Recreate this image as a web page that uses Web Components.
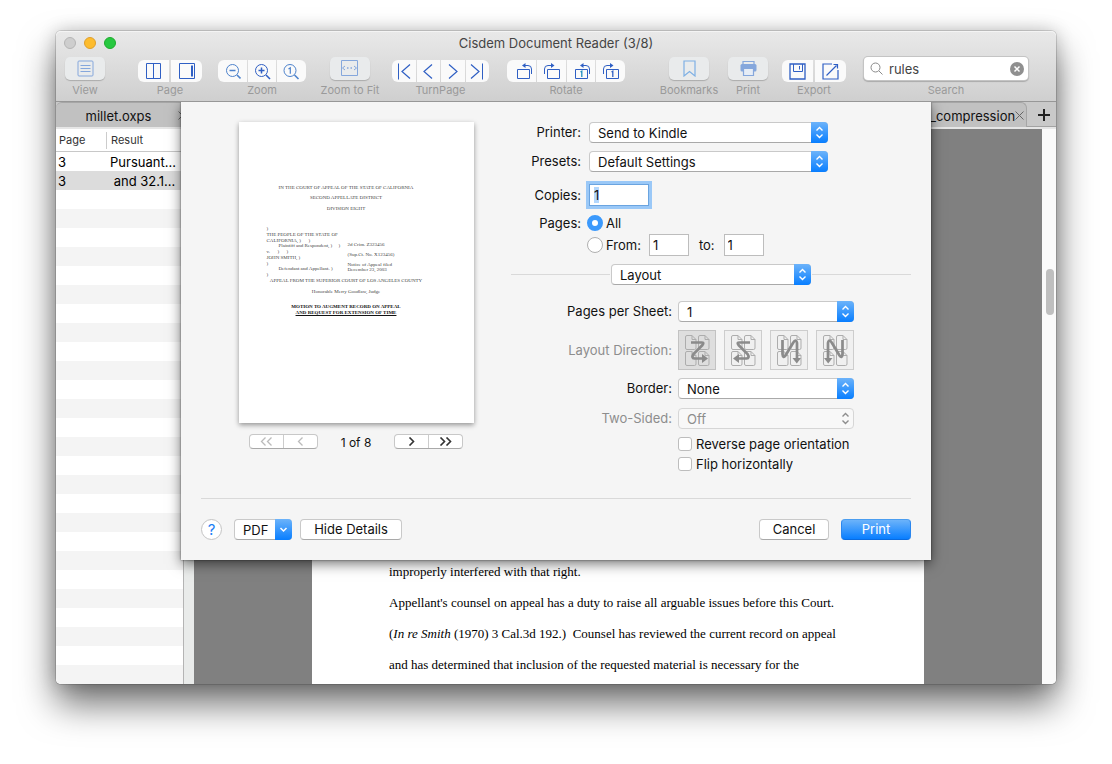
<!DOCTYPE html>
<html lang="en">
<head>
<meta charset="utf-8">
<title>Cisdem Document Reader</title>
<style>
  html { height: 100%; }
  body { margin: 0; box-sizing: border-box; min-height: 100vh; padding: 31px 56px 80px; display: flex;
    background: #fff; font: 13px/16px Inter, "Liberation Sans", sans-serif; color: #111; }
  app-window { flex: 1; min-width: 0; }
</style>
</head>
<body>
<app-window></app-window>
<script>
const FORM = 'button,input,select{font:inherit;color:inherit;margin:0;box-sizing:border-box}button{padding:0;border:0;background:none}svg{display:block}*{box-sizing:border-box}';

function define(name, render, ready) {
  customElements.define(name, class extends HTMLElement {
    connectedCallback() {
      if (this.shadowRoot) return;
      const root = this.attachShadow({ mode: 'open' });
      root.innerHTML = '<style>' + FORM + '</style>' + render(this);
      if (ready) ready(root, this);
    }
  });
}

const svg = (w, h, body) => `<svg width="${w}" height="${h}" viewBox="0 0 ${w} ${h}" fill="none" stroke="currentColor" aria-hidden="true">${body}</svg>`;
const ICONS = {
  view: svg(17, 17, '<rect x="1" y="1" width="15" height="15" rx="1"/><path d="M3.5 5.5h10M3.5 8.5h10M3.5 11.5h10" stroke-width="1"/>'),
  columns: svg(17, 17, '<path d="M1.5 .5h14v15h-14zM8.5 .5v15"/>'),
  sidebar: svg(17, 17, '<path d="M1.5 .5h15v15h-15z"/><path d="M14 2.5v11" stroke-width="2"/>'),
  zoomout: svg(17, 17, '<g stroke="#4d82cc"><circle cx="8.5" cy="7.5" r="6"/><path d="M5.5 7.5h6" stroke-width="1.5"/><path d="M13 12l3.500 3.500" stroke-width="1.6"/></g>'),
  zoomin: svg(17, 17, '<circle cx="7.5" cy="7.5" r="6"/><path d="M4.5 7.5h6M7.5 4.5v6" stroke-width="1.5"/><path d="M12 12l4 4" stroke-width="1.6"/>'),
  zoomone: svg(17, 17, '<g stroke="#4d82cc"><circle cx="7" cy="7.5" r="6"/><path d="M5.500 6l1.8-1.2v6" stroke-width="1.2"/><path d="M11.500 12l4 4" stroke-width="1.6"/></g>'),
  fit: svg(18, 17, '<path d="M.5 .5h16v15h-16z"/><path d="M4 6l-2.500 2L4 10M13 6l2.500 2L13 10"/><path d="M6 8h1.500M9.500 8h1.500" stroke-width="1.500"/>'),
  first: svg(14, 17, '<path d="M1.500 .5v16" /><path d="M13 1.500L5 8.500l8 7" stroke-width="1.200"/>'),
  prev: svg(12, 17, '<path d="M10 1.500L2 8.500l8 7" stroke-width="1.200"/>'),
  next: svg(12, 17, '<path d="M2 1.500l8 7-8 7" stroke-width="1.200"/>'),
  last: svg(14, 17, '<path d="M12.500 .5v16"/><path d="M1 1.500l8 7-8 7" stroke-width="1.200"/>'),
  rotl: svg(23, 17, '<g transform="translate(6)"><path d="M1.500 6.500h12v9h-12z"/><path d="M7 2.500h5q3.500 0 3.500 3.500v5"/><path d="M9.500 0v5L6 2.500z" fill="currentColor" stroke="none"/></g>'),
  rotr: svg(17, 17, '<path d="M4.500 6.500h12v9h-12z"/><path d="M10 2.500H5Q1.500 2.500 1.500 6v5"/><path d="M8 0v5l3.500-2.500z" fill="currentColor" stroke="none"/>'),
  rotl1: svg(21, 17, '<g transform="translate(4)"><path d="M1.500 6.500h12v9h-12z"/><path d="M7 2.500h5q3.500 0 3.500 3.500v5"/><path d="M9.500 0v5L6 2.500z" fill="currentColor" stroke="none"/><path d="M6.500 9l1.300-.8v5.800" stroke="#1f8fc0" stroke-width="1.300"/></g>'),
  rotr1: svg(17, 17, '<path d="M4.500 6.500h12v9h-12z"/><path d="M10 2.500H5Q1.500 2.500 1.500 6v5"/><path d="M8 0v5l3.500-2.500z" fill="currentColor" stroke="none"/><path d="M9.500 9l1.300-.8v5.800" stroke-width="1.300"/>'),
  bookmark: svg(13, 17, '<path d="M1 1h11v15l-5.500-4.500L1 16z" stroke="#7fb0e4" stroke-width="1.200"/>'),
  print: svg(17, 17, '<path d="M3 4V1.500h11V4" stroke-width="1.200"/><rect x=".5" y="4" width="16" height="7.500" rx="1.500" fill="currentColor" stroke="none"/><path d="M3.500 8.500h10v7h-10z" fill="#e6edf6" stroke-width="1.200"/>'),
  save: svg(17, 17, '<path d="M1 1h15v15H1z" stroke-width="1.300"/><path d="M4.500 1v7.500h9V1M10.500 3v3.500"/>'),
  share: svg(17, 17, '<path d="M10 1H1v15h15V7M4.500 12.500L14.500 2.500M11.500 1.500h4V5.500" stroke-width="1.200"/>'),
};

/* One labelled toolbar entry: a single pale key, or a joined row of keys. */
define('tool-item', el => `<style>
  :host{display:flex;flex-direction:column;align-items:center;justify-content:flex-end;gap:1px;flex:none}
  .keys{display:flex;gap:2px;width:100%;color:#2f5fc4}
  .keys button{flex:1 1 0;height:22px;background:#fafafa;display:flex;align-items:center;justify-content:center}
  .keys button:first-child{border-radius:6px 0 0 6px}
  .keys button:last-child{border-radius:0 6px 6px 0}
  .keys.tight{gap:1px}
  .keys.solo{width:40px;padding-bottom:2px;color:#85a7dc}
  .keys.solo button{border-radius:5px;height:23px;background:#e9ebec;box-shadow:0 1px 1px #0003}
  span{font-size:11px;line-height:14px;color:#9a9a9a;white-space:nowrap}
</style>` + (el.hasAttribute('icons') ? (() => {
  const list = el.getAttribute('icons').split(' ');
  return `<div class="keys ${list.length === 1 ? 'solo' : list.length > 2 ? 'tight' : ''}">` +
    list.map(i => `<button type="button" aria-label="${i}">${ICONS[i]}</button>`).join('') + '</div>';
})() : '<slot></slot>') + `<span>${el.getAttribute('label')}</span>`);

define('search-field', () => `<style>
  :host{display:flex;align-items:center;gap:6px;width:164px;height:23px;margin-bottom:2px;padding:0 4px 0 6px;background:#fff;border-radius:4px;box-shadow:0 0 0 1px #c4c4c4,0 1px 1px 1px #aaa;color:#444}
  input{flex:1;min-width:0;border:0;outline:0;background:none;padding:0;height:18px}
  button{width:14px;height:14px;border-radius:7px;background:#8f8f8f;color:#fff;display:grid;place-items:center}
</style>
${svg(13, 13, '<g stroke="#8a8a8a"><circle cx="5.500" cy="5.500" r="4.500"/><path d="M9 9l3.500 3.500"/></g>')}
<input type="text" value="rules" aria-label="Search">
<button type="button" aria-label="Clear search">${svg(8, 8, '<path d="M1.500 1.500l5 5M6.500 1.500l-5 5" stroke-width="1.500"/>')}</button>`);

define('window-toolbar', () => `<style>
  :host{display:block;background:linear-gradient(#e9e9e9,#cfcfcf);border-bottom:1px solid #979797;border-radius:5px 5px 0 0;box-shadow:inset 0 1px #f4f4f4}
  .title{display:grid;grid-template-columns:1fr auto 1fr;align-items:center;height:24px;padding:0 8px;color:#454545}
  .lights{display:flex;gap:8px}
  .lights button{width:12px;height:12px;border-radius:6px;border:1px solid #b5b5b5;background:#cecece}
  .lights .min{background:#fdbc2e;border-color:#df9f2b}
  .lights .max{background:#27c840;border-color:#1eab2c}
  .tools{display:flex;height:46px;padding:0 28px 4px 9px}
  .touch{margin-left:9px}.tight{margin-left:12px}.near{margin-left:14px}.mid{margin-left:18px}.far{margin-left:33px}.end{margin-left:auto}
  .page{margin-right:-2px}
  .w40{width:40px}.w60{width:60px}.w64{width:64px}.w88{width:88px}.w97{width:97px}.w118{width:118px}
</style>
<div class="title"><div class="lights"><button aria-label="Close"></button><button class="min" aria-label="Minimize"></button><button class="max" aria-label="Full screen"></button></div><span>Cisdem Document Reader (3/8)</span></div>
<div class="tools">
  <tool-item class="w40" label="View" icons="view"></tool-item>
  <tool-item class="far page w64" label="Page" icons="columns sidebar"></tool-item>
  <tool-item class="mid w88" label="Zoom" icons="zoomout zoomin zoomone"></tool-item>
  <tool-item class="near w60" label="Zoom to Fit" icons="fit"></tool-item>
  <tool-item class="tight w97" label="TurnPage" icons="first prev next last"></tool-item>
  <tool-item class="mid w118" label="Rotate" icons="rotl rotr rotl1 rotr1"></tool-item>
  <tool-item class="end w60" label="Bookmarks" icons="bookmark"></tool-item>
  <tool-item class="touch w40" label="Print" icons="print"></tool-item>
  <tool-item class="near w64" label="Export" icons="save share"></tool-item>
  <tool-item class="mid" label="Search"><search-field></search-field></tool-item>
</div>`);

define('tab-strip', () => `<style>
  :host{display:flex;height:25px;background:#c9c9c9;border-bottom:1px solid #a3a3a3}
  .tab{display:flex;align-items:center;height:25px;padding-top:1px;background:#c1c1c1;border:1px solid #a6a6a6;border-bottom:0;border-radius:6px 6px 0 0}
  .tab b{font-weight:400;flex:1;white-space:nowrap;text-align:center}
  .first{width:136px;padding-right:4px;border-left:0}
  .first b{padding-left:3px}
  .last{margin-left:auto;width:100px;padding-left:2px;padding-right:3px}
  .last b{text-align:left}
  button{display:grid;place-items:center;color:#666}
  .add{width:29px;color:#222;padding:2px 0 0 4px}
</style>
<div class="tab first"><b>millet.oxps</b><button aria-label="Close tab">${svg(9, 9, '<path d="M.5 .5l8 8M8.500 .5l-8 8"/>')}</button></div>
<div class="tab last"><b>_compression</b><button aria-label="Close tab">${svg(9, 9, '<path d="M.5 .5l8 8M8.500 .5l-8 8"/>')}</button></div>
<button class="add" aria-label="New tab">${svg(12, 12, '<path d="M0 6h12M6 0v12" stroke-width="2"/>')}</button>`);

define('result-list', () => `<style>
  :host{display:block;flex:none;width:127px;border-top:2px solid #e6e6e6;
    background:repeating-linear-gradient(#fff 0 19px,#f4f4f4 19px 38px) 0 23px no-repeat #fff}
  table{border-collapse:separate;border-spacing:0;width:100%;table-layout:fixed}
  th{font-weight:400;font-size:11px;text-align:left;height:23px;padding:0 3px;color:#333;background:#fff;border-bottom:1px solid #c8c8c8}
  th:first-child{width:51px;background:#fff linear-gradient(#ccc,#ccc) no-repeat right center/1px 17px}
  td{height:19px;padding:0 2px;white-space:pre;color:#000;background:#fff}
  th:last-child{padding-left:4px}
  td:last-child{padding-left:3px}
  .sel td{background:#dcdcdc}
</style>
<table><thead><tr><th>Page</th><th>Result</th></tr></thead>
<tbody><tr><td>3</td><td>Pursuant...</td></tr><tr class="sel"><td>3</td><td> and 32.1...</td></tr></tbody></table>`);

define('document-view', () => `<style>
  :host{display:flex;flex:1;min-width:0;border-left:1px solid #b4b4b4;border-top:2px solid #e6e6e6;padding-left:10px;background:#e9ebea;overflow:hidden}
  .canvas{flex:1;display:flex;justify-content:center;background:#808080}
  article{width:612px;background:#fff;display:flex;flex-direction:column;justify-content:flex-end;padding:0 77px 4px;font:13px/31px "Liberation Serif",serif;color:#000}
  p{margin:0;white-space:pre}
  .rail{width:14px;background:#fafafa;padding:140px 2px 0 4px}
  .thumb{height:46px;width:8px;border-radius:4px;background:#bfbfbf}
</style>
<div class="canvas"><article><p>improperly interfered with that right.</p><p>Appellant's counsel on appeal has a duty to raise all arguable issues before this Court.</p><p>(<i>In re Smith</i> (1970) 3 Cal.3d 192.)  Counsel has reviewed the current record on appeal</p><p>and has determined that inclusion of the requested material is necessary for the</p></article></div>
<div class="rail"><div class="thumb"></div></div>`);

/* Pop-up button: label column, then the select with its arrow cap. */
define('mac-select', el => {
  const label = el.getAttribute('label'), value = el.getAttribute('value'), off = el.hasAttribute('disabled');
  return `<style>
  :host{display:flex;gap:var(--label-gap,0px);align-items:center;line-height:21px;color:#111}
  :host([disabled]){color:#8d8d8d}
  label{width:var(--label-width);text-align:right;white-space:nowrap}
  .box{display:grid;width:var(--field-width);height:21px}
  select,.cap{grid-area:1/1}
  select{appearance:none;width:100%;height:21px;padding:0 24px 0 8px;border:1px solid #c9c9c9;border-bottom-color:#a9a9a9;border-radius:4px;background:#fff;opacity:1;line-height:16px}
  .cap{justify-self:end;width:17px;height:21px;border-radius:0 4px 4px 0;background:linear-gradient(#6cb3fa,#087eff);color:#fff;display:grid;place-items:center;pointer-events:none}
  :host([disabled]) select{background:#f8f8f8;border-color:#d6d6d6}
  :host([disabled]) .cap{background:none;color:#8d8d8d}
</style>${label ? `<label for="s">${label}</label>` : ''}<div class="box"><select id="s" ${off ? 'disabled' : ''} ${label ? '' : 'aria-label="Settings pane"'}><option>${value}</option></select><span class="cap">${svg(9, 13, '<path d="M1.500 4.500l3-3 3 3M1.500 8.500l3 3 3-3" stroke-width="1.400"/>')}</span></div>`;
});

define('mac-button', el => `<style>
  :host{display:block}
  button{width:100%;height:21px;border-radius:4px;background:#fff;border:1px solid #c9c9c9;border-bottom-color:#a9a9a9;color:#111;line-height:19px}
  :host([primary]) button{background:linear-gradient(#6cb3fa,#087eff);border-color:#4a9df0 #2a86ee #0a6be0;color:#fff}
</style><button type="button"><slot></slot></button>`);

define('page-preview', () => `<style>
  :host{display:flex;flex-direction:column;align-items:center;gap:10px}
  .paper{width:235px;height:301px;background:#fff;box-shadow:0 2px 5px #0006;padding:63px 48px 0 28px;font:5px/5px "Liberation Serif",serif;color:#444;white-space:pre}
  .paper p{margin:0;display:flex;justify-content:center}
  .g5{padding-top:5px}.g6{padding-top:6px}.g10{padding-top:10px}.g1{padding-top:1px}
  .case{display:flex;height:51px;margin-top:15px}
  .left{width:81px;display:flex;flex-direction:column;justify-content:space-between}
  .left .in{padding-left:12px}
  .right{padding-top:16px;display:grid;row-gap:5px;align-content:start}
  .paper .strong{font-weight:700;color:#111}
  u{text-decoration-thickness:1px}
  nav{display:flex;align-items:center;justify-content:space-between;width:214px;height:16px}
  .pair{display:flex;width:69px;height:15px;background:#fff;border:1px solid #c8c8c8;border-bottom-color:#a9a9a9;border-radius:4px;color:#333}
  .pair.off{color:#bbb}
  .pair button{flex:1;display:grid;place-items:center}
  .pair button+button{border-left:1px solid #ccc}
  nav span{font-size:12px;padding-top:3px}
</style>
<div class="paper"><p>IN THE COURT OF APPEAL OF THE STATE OF CALIFORNIA</p><p class="g5">SECOND APPELLATE DISTRICT</p><p class="g6">DIVISION EIGHT</p><div class="case"><div class="left"><div>)</div><div>THE PEOPLE OF THE STATE OF</div><div>CALIFORNIA, )      )</div><div class="in">Plaintiff and Respondent, )     )</div><div>v.      )      )</div><div>JOHN SMITH, )</div><div>)</div><div class="in">Defendant and Appellant. )</div><div>)</div></div><div class="right"><div>2d Crim. Z323456</div><div>(Sup.Ct. No. X123456)</div><div>Notice of Appeal filed
December 23, 2003</div></div></div><p class="g1">APPEAL FROM THE SUPERIOR COURT OF LOS ANGELES COUNTY</p><p class="g6">Honorable Merry Goodlaw, Judge</p><p class="g10 strong">MOTION TO AUGMENT RECORD ON APPEAL</p><p class="g1 strong"><u>AND REQUEST FOR EXTENSION OF TIME</u></p></div>
<nav><div class="pair off"><button disabled aria-label="First page">${svg(13, 9, '<path d="M5.500 .5l-4 4 4 4M11.500 .5l-4 4 4 4" stroke-width="1.300"/>')}</button><button disabled aria-label="Previous page">${svg(7, 9, '<path d="M5.500 .5l-4 4 4 4" stroke-width="1.300"/>')}</button></div><span>1 of 8</span><div class="pair"><button aria-label="Next page">${svg(7, 9, '<path d="M1.500 .5l4 4-4 4" stroke-width="1.600"/>')}</button><button aria-label="Last page">${svg(13, 9, '<path d="M1.500 .5l4 4-4 4M7.500 .5l4 4-4 4" stroke-width="1.600"/>')}</button></div></nav>`);

/* Four small sheets with a turned corner, and the reading path drawn over them. */
const sheetAt = (x, y) => `<path transform="translate(${x} ${y})" d="M2 .5h5l4 4V13q0 1.500-1.500 1.500H2Q.5 14.500 .5 13V2Q.5 .5 2 .5zM7 .5v4h4"/>`;
const sheets = '<g stroke="#adadad">' + sheetAt(0, 0) + sheetAt(13, 0) + sheetAt(0, 16) + sheetAt(13, 16) + '</g>';
const flow = {
  z: '<path d="M6 7.500h10.500q3 0 1 2.500L8.500 19q-2.500 4 1 4.500H18"/><path d="M17 19l6 4.500-6 4.500z" fill="#8b8b8b" stroke="none"/>',
  n: '<path d="M5.500 5v14q.5 5 3 1.500L16 8q3-5 4 0v16"/><path d="M15.500 23h8.500l-4.200 5.500z" fill="#8b8b8b" stroke="none"/>',
};
const dir = (k, flip) => svg(25, 31, sheets + `<g stroke="#8b8b8b" stroke-width="2.700" ${flip ? 'transform="matrix(-1 0 0 1 25 0)"' : ''}>${flow[k]}</g>`);

define('print-sheet', () => `<style>
  :host{display:block;background:#f5f5f5;padding:20px;box-shadow:0 4px 12px #0008,0 0 2px #0008}
  .top{display:grid;grid-template-columns:310px 1fr}
  .form{--label-width:70px;--label-gap:8px;--field-width:239px;display:flex;flex-direction:column}
  .presets{margin-top:8px}
  .row{display:flex;align-items:center}
  .row .lab{display:block;width:70px;text-align:right;margin-right:8px}
  .copies{margin-top:12px}
  .num{height:22px;padding:0 3px;border:1px solid #bdbdbd;border-radius:0;background:#fff;outline:0;width:40px}
  .copies .num{width:60px;padding:0 4px;border-color:#6aa4e0;box-shadow:0 0 0 3px #9ac8f7}
  .num::selection{background:#b3d7fd;color:#111}
  .all{margin-top:9px;height:16px}
  .from{margin-top:3px}
  .row label{display:flex;align-items:center}
  input[type=radio]{appearance:none;width:16px;height:16px;border:1px solid #b0b0b0;border-radius:8px;background:#fff;margin:0 3px 0 -2px}
  input[type=radio]:checked{border:5px solid #3b99fc}
  .from .num{margin-left:8px}
  .to{margin-left:10px}
  .to+.num{margin-left:9px}
  .pane{margin-top:8px;display:flex;align-items:center;gap:1px;--field-width:200px}
  .pane:before,.pane:after{content:"";flex:1;height:1px;background:#d9d9d9}
  .layout{--label-width:161px;--label-gap:6px;--field-width:176px;display:flex;flex-direction:column;gap:8px;margin-top:16px}
  .dirs{display:flex;align-items:center;color:#8d8d8d}
  .dirs span{width:161px;text-align:right;margin-right:6px}
  .dirs div{display:flex;gap:8px}
  .dirs button{width:38px;height:40px;border:1px solid #cdcdcd;background:#f0f0f0;display:grid;place-items:center}
  .dirs button:first-child{background:#dedede;border-color:#c2c2c2}
  .sided{margin-top:1px}
  .checks{display:grid;gap:6px;padding-left:167px;line-height:14px}
  .checks label{display:flex;align-items:center;gap:4px;white-space:nowrap}
  input[type=checkbox]{appearance:none;width:14px;height:14px;border:1px solid #bdbdbd;border-radius:3px;background:#fff}
  footer{display:flex;align-items:center;margin-top:27px;padding-top:20px;border-top:1px solid #d9d9d9}
  .help{width:21px;height:21px;border-radius:11px;background:#fff;border:1px solid #c4c4c4;color:#1a7ef5;font-size:15px;margin-right:12px}
  .pdf{display:flex;width:58px;height:21px;margin-right:8px;border:1px solid #c9c9c9;border-bottom-color:#a9a9a9;border-right:0;border-radius:4px;background:#fff;align-items:center;justify-content:space-between;padding-left:8px}
  .pdf i{width:17px;height:21px;background:linear-gradient(#6cb3fa,#087eff);border-radius:0 4px 4px 0;color:#fff;display:grid;place-items:center}
  .hide{width:102px;margin-right:auto}
  .act{width:70px}
  .act+.act{margin-left:12px}
</style>
<div class="top"><page-preview></page-preview>
<div class="form">
  <mac-select label="Printer:" value="Send to Kindle"></mac-select>
  <mac-select class="presets" label="Presets:" value="Default Settings"></mac-select>
  <div class="row copies"><label class="lab" for="copies">Copies:</label><input class="num" id="copies" type="text" value="1"></div>
  <div class="row all"><span class="lab">Pages:</span><label><input type="radio" name="pages" checked>All</label></div>
  <div class="row from"><span class="lab"></span><label for="range"><input type="radio" name="pages" id="range">From:</label><input class="num" type="text" value="1" aria-label="From page"><label class="to" for="to">to:</label><input class="num" id="to" type="text" value="1"></div>
  <div class="pane"><mac-select value="Layout"></mac-select></div>
  <div class="layout">
    <mac-select label="Pages per Sheet:" value="1"></mac-select>
    <div class="dirs"><span>Layout Direction:</span><div><button disabled aria-label="Across, left to right">${dir('z')}</button><button disabled aria-label="Across, right to left">${dir('z', 1)}</button><button disabled aria-label="Down, left to right">${dir('n')}</button><button disabled aria-label="Down, right to left">${dir('n', 1)}</button></div></div>
    <mac-select label="Border:" value="None"></mac-select>
    <mac-select class="sided" label="Two-Sided:" value="Off" disabled></mac-select>
    <div class="checks"><label><input type="checkbox">Reverse page orientation</label><label><input type="checkbox">Flip horizontally</label></div>
  </div>
</div></div>
<footer><button class="help" type="button">?</button><button class="pdf" type="button">PDF<i>${svg(9, 6, '<path d="M1.500 1l3 3 3-3" stroke-width="1.500"/>')}</i></button><mac-button class="hide">Hide Details</mac-button><mac-button class="act">Cancel</mac-button><mac-button class="act" primary>Print</mac-button></footer>`,
root => { const c = root.getElementById('copies'); c.focus({ preventScroll: true }); c.select(); });

define('app-window', () => `<style>
  :host{display:flex;flex-direction:column;border-radius:5px;box-shadow:0 0 0 1px #0002,0 20px 36px #00000090,0 0 18px #0003}
  .work{position:relative;flex:1;display:flex;flex-direction:column;overflow:hidden;border-radius:0 0 5px 5px}
  .panes{flex:1;display:flex;min-height:0}
  print-sheet{position:absolute;top:0;left:0;right:0;margin:0 auto;width:750px;max-width:100%}
</style>
<window-toolbar></window-toolbar>
<div class="work"><tab-strip></tab-strip><div class="panes"><result-list></result-list><document-view></document-view></div><print-sheet></print-sheet></div>`);
</script>
</body>
</html>
